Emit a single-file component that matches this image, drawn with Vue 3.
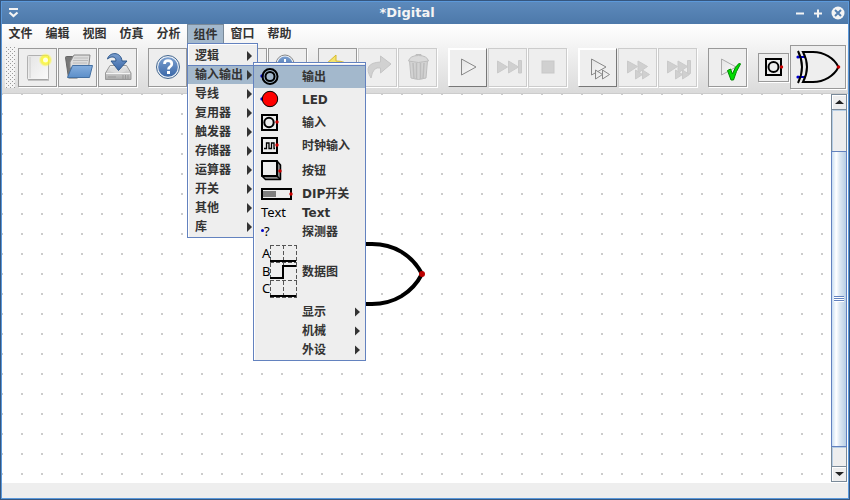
<script setup>
const menus = ['文件', '编辑', '视图', '仿真', '分析', '组件', '窗口', '帮助']
const openMenu = '组件'
const groups = ['逻辑', '输入输出', '导线', '复用器', '触发器', '存储器', '运算器', '开关', '其他', '库']
const openGroup = '输入输出'
const parts = [
  { label: '输出', icon: 'out', size: 'medium', active: true },
  { label: 'LED', icon: 'led', size: 'medium' },
  { label: '输入', icon: 'in', size: 'medium' },
  { label: '时钟输入', icon: 'clock', size: 'medium' },
  { label: '按钮', icon: 'button', size: 'large' },
  { label: 'DIP开关', icon: 'dip', size: 'small' },
  { label: 'Text', icon: 'text', size: 'small' },
  { label: '探测器', icon: 'probe', size: 'small' },
  { label: '数据图', icon: 'graph', size: 'huge' },
  { label: '显示', sub: true, size: 'small' },
  { label: '机械', sub: true, size: 'small' },
  { label: '外设', sub: true, size: 'small' }
]
const toolGroups = [
  [{ icon: 'new', label: 'New' }, { icon: 'open', label: 'Open' }, { icon: 'save', label: 'Save' }],
  [{ icon: 'help', label: 'Help' }, { icon: 'fit', label: 'Fit' }, { icon: 'zoomin', label: 'Zoom in' }, { icon: 'zoomout', label: 'Zoom out' }],
  [{ icon: 'undo', label: 'Undo' }, { icon: 'redo', label: 'Redo', off: true }, { icon: 'trash', label: 'Delete', off: true }],
  [{ icon: 'play', label: 'Start', raised: true }, { icon: 'skip', label: 'Run to break', off: true }, { icon: 'stop', label: 'Stop', off: true }],
  [{ icon: 'micro', label: 'Single gate', raised: true }, { icon: 'fast', label: 'Fast run', off: true }, { icon: 'fastend', label: 'Run to end', off: true }],
  [{ icon: 'check', label: 'Run tests' }]
]
</script>

<template>
  <div class="window">
    <header class="titlebar">
      <button class="win-btn" aria-label="Window menu">
        <svg width="11" height="10" viewBox="0 0 11 10"><path d="M1 1h9" stroke="#f4f4f4" stroke-width="2" /><path d="M1.500 4.500L5.500 8L9.500 4.500" fill="none" stroke="#f4f4f4" stroke-width="2.200" /></svg>
      </button>
      <h1>*Digital</h1>
      <div class="win-actions">
        <button class="win-btn" aria-label="Minimize">
          <svg width="10" height="14" viewBox="0 0 10 14"><path d="M1 7.500h8" stroke="#f4f4f4" stroke-width="2" /></svg>
        </button>
        <button class="win-btn" aria-label="Maximize">
          <svg width="10" height="14" viewBox="0 0 10 14"><path d="M1 7.500h8M5 3.500v8" stroke="#f4f4f4" stroke-width="2" /></svg>
        </button>
        <button class="win-btn" aria-label="Close">
          <svg width="14" height="14" viewBox="0 0 14 14"><circle cx="7" cy="7" r="6.500" fill="#f4f4f4" /><path d="M4 4l6 6M10 4l-6 6" stroke="#5681b2" stroke-width="2" /></svg>
        </button>
      </div>
    </header>

    <div class="bars">
      <ul class="menubar">
        <li v-for="m in menus" :key="m">
          <button class="menu-title" :class="{ open: m === openMenu }">{{ m }}</button>
          <ul v-if="m === openMenu" class="popup groups">
            <li v-for="g in groups" :key="g">
              <button class="entry" :class="{ active: g === openGroup }">
                <span>{{ g }}</span>
                <svg class="arrow" width="5" height="10" viewBox="0 0 5 10"><path d="M0 0L5 5L0 10Z" fill="#333" /></svg>
              </button>
              <ul v-if="g === openGroup" class="popup parts">
                <li v-for="p in parts" :key="p.label">
                  <button class="entry part" :class="[p.size, { active: p.active }]">
                    <span class="icon">
                      <svg v-if="p.icon === 'out'" width="20" height="20" viewBox="0 0 20 20" fill="none" stroke="#000" stroke-width="2"><circle cx="2" cy="9" r="1.700" fill="#00c" stroke="none" /><circle cx="10" cy="9.500" r="7.500" /><circle cx="10" cy="9.500" r="4.500" /></svg>
                      <svg v-else-if="p.icon === 'led'" width="20" height="20" viewBox="0 0 20 20"><circle cx="2" cy="9" r="1.700" fill="#00c" /><circle cx="10" cy="9" r="7.700" fill="#f00" stroke="#000" /></svg>
                      <svg v-else-if="p.icon === 'in'" width="20" height="20" viewBox="0 0 20 20" fill="none" stroke="#000" stroke-width="2"><rect x="2" y="2" width="15" height="15" /><circle cx="9" cy="9.500" r="4.700" /><circle cx="17" cy="9" r="1.700" fill="#c00" stroke="none" /></svg>
                      <svg v-else-if="p.icon === 'clock'" width="20" height="20" viewBox="0 0 20 20" fill="none" stroke="#000" stroke-width="2"><rect x="2" y="2" width="15" height="15" /><path d="M4 12.500h2.500V7H9v5.500h2.500V7H14v5.500h1" stroke-width="1.300" /><circle cx="17" cy="9" r="1.700" fill="#c00" stroke="none" /></svg>
                      <svg v-else-if="p.icon === 'button'" width="24" height="24" viewBox="0 0 24 24" stroke="#000" stroke-width="1.500" stroke-linejoin="round"><path d="M2 17L5.500 20.500H20.500V6L17 2V17Z" fill="#888" /><rect x="2" y="2" width="15" height="15" fill="#eee" stroke-width="2" /><path d="M17 17l3 3" /><circle cx="20" cy="12" r="1.700" fill="#c00" stroke="none" /></svg>
                      <svg v-else-if="p.icon === 'dip'" width="34" height="16" viewBox="0 0 34 16"><rect x="2" y="3" width="29" height="10" fill="none" stroke="#000" stroke-width="2" /><rect x="3" y="5" width="13" height="6" fill="#808080" /><circle cx="31" cy="8" r="1.700" fill="#c00" /></svg>
                      <span v-else-if="p.icon === 'text'" class="glyph">Text</span>
                      <span v-else-if="p.icon === 'probe'" class="glyph probe"><i></i>?</span>
                      <svg v-else-if="p.icon === 'graph'" width="38" height="58" viewBox="0 0 38 58">
                        <path d="M10.500 2V55M23.500 2V55M36.500 2V55M10 2.500H37M10 19.500H37M10 37.500H37M10 54.500H37" fill="none" stroke="#555" stroke-dasharray="4 2" />
                        <path d="M10 18H36M10 35H23V23H36M10 53H36" fill="none" stroke="#000" stroke-width="2" />
                        <g class="glyph"><text x="2" y="15">A</text><text x="2" y="33">B</text><text x="2" y="50">C</text></g>
                      </svg>
                    </span>
                    <span>{{ p.label }}</span>
                    <svg v-if="p.sub" class="arrow" width="5" height="10" viewBox="0 0 5 10"><path d="M0 0.500L5 5L0 9.500Z" fill="#333" /></svg>
                  </button>
                </li>
              </ul>
            </li>
          </ul>
        </li>
      </ul>

      <div class="toolbar">
        <span class="grip"></span>
        <div v-for="(group, i) in toolGroups" :key="i" class="tool-group">
          <button v-for="t in group" :key="t.icon" class="tool" :class="{ raised: t.raised }" :disabled="t.off" :aria-label="t.label">
            <svg width="32" height="32" viewBox="0 0 32 32">
              <g v-if="t.icon === 'new'">
                <rect x="5.500" y="4.500" width="21" height="24" rx="1" fill="url(#paper)" stroke="#b0b0b0" /><path d="M8 6v21" stroke="#ccc" /><path d="M6 29h21" stroke="#999" />
                <circle cx="23.500" cy="9" r="7" fill="url(#glow)" /><circle cx="23.500" cy="9" r="2.500" fill="#ffd" />
              </g>
              <g v-else-if="t.icon === 'open'">
                <path d="M3.500 6.500q0-1 1-1h6l2 2h3V27H6.500Z" fill="#777" stroke="#666" />
                <path d="M8 11L12 4H28L26.500 17H8Z" fill="#ddd" stroke="#888" /><path d="M12 7h14M11 9.500h15M11 12h14" stroke="#bbb" />
                <path d="M10.500 14.500H30.500L27.500 26.500H5.500Z" fill="url(#folder)" stroke="#4470a3" />
              </g>
              <g v-else-if="t.icon === 'save'">
                <path d="M8 14.500H24.500L29 22V28.500H3.500V22Z" fill="url(#drive)" stroke="#999" /><path d="M4 22.500H28" stroke="#f4f4f4" /><path d="M6 26h8M21 24v4M23.500 24v4M26 24v4" stroke="#999" />
                <ellipse cx="16" cy="19" rx="8" ry="3" fill="#ddd" />
                <path d="M5.500 8C7 1 19 0 20 10H25L16.500 19.500L9 10H14C14 5 9 5 5.500 8Z" fill="url(#blue)" stroke="#315a8d" />
              </g>
              <g v-else-if="t.icon === 'help'">
                <circle cx="16" cy="16" r="11.500" fill="#e8eef5" stroke="#44678f" /><circle cx="16" cy="16" r="9.800" fill="url(#blue)" />
                <path d="M12.500 13Q12.500 9.700 16 9.700Q19.800 9.700 19.800 13Q19.800 15 17.700 16.200Q16.500 17 16.500 18.500" fill="none" stroke="#fff" stroke-width="2.700" /><rect x="15" y="20" width="3" height="3" fill="#fff" />
              </g>
              <g v-else-if="t.icon === 'fit' || t.icon === 'zoomin' || t.icon === 'zoomout'">
                <circle cx="13" cy="13" r="9" fill="#e8eef5" stroke="#888" /><circle cx="13" cy="13" r="7.500" fill="url(#blue)" /><path d="M9 13h8M13 8v10" stroke="#fff" stroke-width="2" /><path d="M19 19l8 8" stroke="#777" stroke-width="4" />
              </g>
              <path v-else-if="t.icon === 'undo'" d="M14 4L3 14L14 24V18Q25 17 26 28Q32 10 14 10Z" fill="#f5e36b" stroke="#d6ba30" />
              <path v-else-if="t.icon === 'redo'" d="M18.500 5L29 13L18.500 22V17Q11 15 9 27Q0 12 18.500 11Z" fill="#d1d1d1" stroke="#c5c5c5" />
              <g v-else-if="t.icon === 'trash'" stroke="#bdbdbd">
                <path d="M7.500 9.500H25.500L24 27Q16.500 30 9 27Z" fill="#d3d3d3" /><path d="M11 12l1 15M14.500 12v16M18.500 12v16M22 12l-1 15" stroke-width="1.500" /><path d="M6.500 10Q8 4.500 16.500 4.500T26.500 10Q16.500 13 6.500 10Z" fill="#dadada" /><path d="M14 5V3.500h5V5" fill="none" />
              </g>
              <g v-else-if="t.icon === 'skip'" fill="#d0d0d0" stroke="#cacaca"><path d="M5.500 10L15.500 16L5.500 22Z" /><path d="M16.500 10L26.500 16L16.500 22Z" /><path d="M26.500 9.500h3v12.500h-3Z" /></g>
              <rect v-else-if="t.icon === 'stop'" x="10" y="10" width="12" height="12" fill="#d0d0d0" stroke="#c8c8c8" />
              <g v-else-if="t.icon === 'fast' || t.icon === 'fastend'" fill="#d0d0d0" stroke="#cacaca"><path d="M5.500 10L15.500 15.500L5.500 22Z" /><path d="M16 10L25.500 15.500L16 22Z" /><path d="M13.500 19L20.500 23.500L13.500 28Z" /><path d="M20.500 19L27.500 23.500L20.500 28Z" /><path v-if="t.icon === 'fastend'" d="M25.500 9.500h3v13h-3Z" /></g>
              <path v-else-if="t.icon === 'play'" d="M9.500 8L24 16L9.500 24Z" fill="url(#paper)" stroke="#888" />
              <g v-else-if="t.icon === 'micro'" fill="url(#paper)" stroke="#888"><path d="M9.500 8L24 16L9.500 24Z" /><path d="M13.500 19L20.500 23.500L13.500 28Z" /><path d="M20.500 19L27.500 23.500L20.500 28Z" /></g>
              <g v-else>
                <path d="M9.500 8L24 16L9.500 24Z" fill="url(#paper)" stroke="#aaa" />
                <path d="M15.500 19.500L18.500 18L20.500 23Q23 15 27.500 12L28.500 13Q24 20 21.500 29H19Z" fill="#0d0" stroke="#080" />
              </g>
            </svg>
          </button>
        </div>
        <div class="recent">
          <button class="tool recent-in" aria-label="输入">
            <svg width="22" height="20" viewBox="0 0 22 20" fill="none" stroke="#000" stroke-width="2"><rect x="3" y="2" width="15" height="16" /><circle cx="10.500" cy="10" r="5" /><circle cx="18.500" cy="10" r="1.700" fill="#c00" stroke="none" /></svg>
          </button>
          <button class="tool recent-xor" aria-label="XOR">
            <svg width="50" height="36" viewBox="0 0 50 36" fill="none" stroke="#000" stroke-width="2"><path d="M5 8H12M5 28H12" stroke="#00c" /><circle cx="5" cy="8" r="1.600" fill="#00c" stroke="none" /><circle cx="5" cy="28" r="1.600" fill="#00c" stroke="none" /><path d="M5 2Q13 18 5 34" /><path d="M10 3H20C31 3 41 9 45.500 18C41 27 31 33 20 33H10Q18 18 10 3Z" /><circle cx="45.500" cy="18" r="1.800" fill="#c00" stroke="none" /></svg>
          </button>
        </div>
      </div>
    </div>

    <main class="workspace">
      <div class="canvas">
        <svg class="gate" width="90" height="70" viewBox="0 0 90 70"><path d="M8 5H36C58 5 76 16 86 35C76 54 58 65 36 65H8Q24 35 8 5Z" fill="none" stroke="#000" stroke-width="4" /><circle cx="86" cy="35" r="3" fill="#b00" /></svg>
      </div>
      <div class="scrollbar">
        <button class="scroll-btn" aria-label="Scroll up"><svg width="9" height="4" viewBox="0 0 9 4"><path d="M0 4L4.500 0L9 4Z" fill="#222" /></svg></button>
        <div class="track">
          <div class="before"></div>
          <div class="thumb"><span class="bumps"></span></div>
          <div class="after"></div>
        </div>
        <button class="scroll-btn" aria-label="Scroll down"><svg width="9" height="4" viewBox="0 0 9 4"><path d="M0 0L4.500 4L9 0Z" fill="#222" /></svg></button>
      </div>
    </main>
    <footer class="status"></footer>

    <svg class="defs" width="0" height="0" aria-hidden="true">
      <defs>
        <linearGradient id="paper" x2="1" y2="1"><stop stop-color="#e4e4e4" /><stop offset="1" stop-color="#fafafa" /></linearGradient>
        <radialGradient id="glow"><stop offset="0.300" stop-color="#ff3" /><stop offset="0.700" stop-color="#f8f032" stop-opacity="0.700" /><stop offset="1" stop-color="#ff6" stop-opacity="0" /></radialGradient>
        <linearGradient id="folder" x2="0" y2="1"><stop stop-color="#85aede" /><stop offset="1" stop-color="#5c8fc9" /></linearGradient>
        <linearGradient id="drive" x2="0" y2="1"><stop stop-color="#eee" /><stop offset="1" stop-color="#aaa" /></linearGradient>
        <linearGradient id="blue" x2="0" y2="1"><stop stop-color="#7b9fcf" /><stop offset="1" stop-color="#3b68a8" /></linearGradient>
      </defs>
    </svg>
  </div>
</template>

<style>
body {
  margin: 0;
}
</style>

<style scoped>
.window,
.window * {
  box-sizing: border-box;
}
.window {
  display: flex;
  flex-direction: column;
  min-height: 100vh;
  border: 1px solid #35567f;
  border-top-width: 0;
  font: bold 12px/18px "DejaVu Sans", "Noto Sans CJK SC", sans-serif;
  color: #333;
  background: #fff;
}
button {
  font: inherit;
  color: inherit;
  margin: 0;
  padding: 0;
  border: 0;
  background: none;
}
svg {
  display: block;
  flex: none;
}
ul {
  list-style: none;
  margin: 0;
  padding: 0;
}
.titlebar {
  display: flex;
  align-items: center;
  height: 24px;
  padding: 1px 4px 0 7px;
  border-top: 1px solid #35567f;
  background: linear-gradient(#5d8abc, #4d79aa);
  box-shadow: inset 0 1px #5b99db, inset 1px 0 #5b99db, inset -1px 0 #5b99db;
}
.titlebar h1 {
  flex: 1;
  margin: 0;
  text-align: center;
  font-size: 13px;
  line-height: 20px;
  color: #f4f4f4;
}
.win-actions {
  display: flex;
  justify-content: flex-end;
  gap: 8px;
}
.bars {
  border: 1px solid #5b99db;
  border-width: 0 1px;
  background: linear-gradient(#fff, #dadada);
}
.menubar {
  display: flex;
}
.menubar > li {
  position: relative;
}
.menu-title {
  display: block;
  width: 37px;
  height: 20px;
  border: 1px solid transparent;
  white-space: nowrap;
}
.menu-title.open {
  background: #a3b8cc;
  border-color: #7a8a99;
  border-bottom: 0;
}
.popup {
  position: absolute;
  z-index: 2;
  border: 1px solid #6382bf;
  background: #eee;
  box-shadow: inset 1px 1px #fff;
}
.groups {
  top: 19px;
  left: 0;
  width: 71px;
  padding: 2px 0 1px;
}
.groups > li {
  position: relative;
}
.parts {
  top: -3px;
  left: calc(100% - 4px);
  width: 113px;
  padding: 2px 0 1px;
}
.entry {
  display: flex;
  align-items: center;
  width: 100%;
  height: 19px;
  padding: 0 5px 0 7px;
  white-space: nowrap;
}
.entry.active {
  background: #a3b8cc;
  box-shadow: inset 0 1px #6382bf;
}
.arrow {
  margin-left: auto;
}
.part .icon {
  flex: none;
  display: flex;
  width: 42px;
}
.part {
  padding-left: 6px;
}
.part.medium {
  height: 23px;
}
.part.large {
  height: 27px;
}
.part.huge {
  height: 61px;
}
.glyph {
  font: 13px/18px "Noto Sans", sans-serif;
  color: #000;
}
span.glyph {
  padding: 0 1px 2px;
}
.probe {
  display: flex;
  align-items: center;
}
.probe i {
  width: 3px;
  height: 3px;
  border-radius: 2px;
  background: #00c;
}
.toolbar {
  display: flex;
  align-items: center;
  height: 50px;
  padding: 0 2px 3px 3px;
  border-bottom: 1px solid #ccc;
}
.grip {
  width: 10px;
  height: 42px;
  margin-right: 3px;
  background:
    conic-gradient(from 90deg at 3px 3px, #999 90deg, transparent 0) 0 0 / 4px 4px,
    conic-gradient(from 90deg at 3px 3px, #999 90deg, transparent 0) 2px 2px / 4px 4px,
    #f4f4f4;
}
.tool-group {
  display: flex;
  gap: 1px;
  margin-right: 11px;
}
.tool {
  display: flex;
  align-items: center;
  justify-content: center;
  width: 39px;
  height: 39px;
  border: 1px solid #999;
  background: #eee;
  box-shadow: 1px 1px #fff;
}
.tool:disabled {
  border-color: #ccc;
}
.tool.raised {
  border: 1px solid;
  border-color: #fff #777 #777 #fff;
  box-shadow: inset 1px 1px #fff;
}
.recent {
  display: flex;
  align-items: center;
  gap: 1px;
  margin-left: auto;
}
.recent .recent-in {
  width: 31px;
  height: 29px;
}
.recent .recent-xor {
  width: 56px;
  height: 44px;
}
.workspace {
  flex: 1;
  display: flex;
  border: 1px solid #5b99db;
  border-width: 0 1px;
  padding-right: 1px;
}
.canvas {
  position: relative;
  flex: 1;
  min-height: 300px;
  background: conic-gradient(from 90deg at 18px 18px, #ccc 90deg, transparent 0) -19px -19px / 20px 20px;
}
.gate {
  position: absolute;
  left: 334px;
  top: 145px;
}
.scrollbar {
  display: flex;
  flex-direction: column;
  width: 16px;
  margin-bottom: 1px;
  border: 1px solid #7a8a99;
}
.scroll-btn {
  display: flex;
  align-items: center;
  justify-content: center;
  height: 14px;
  background: #eee;
  box-shadow: inset 1px 1px #fff;
}
.track {
  flex: 1;
  display: flex;
  flex-direction: column;
  border: 1px solid #7a8a99;
  border-width: 1px 0;
  background: #eee;
}
.before {
  flex: 41;
  box-shadow: inset 1px 1px #b8cfe5;
}
.thumb {
  flex: 296;
  display: flex;
  align-items: center;
  justify-content: center;
  margin: 0 -1px;
  border: 1px solid #6382bf;
  background: linear-gradient(90deg, #c8ddf2, #fff 30%, #dde8f3 55%, #b8cfe5);
}
.after {
  flex: 19;
  box-shadow: inset 1px 1px #b8cfe5;
}
.bumps {
  width: 10px;
  height: 6px;
  background: repeating-linear-gradient(#6382bf 0 1px, #fff 1px 2px);
}
.status {
  height: 16px;
  border: 1px solid #5b99db;
  border-top: 0;
  background: #eee;
}
.defs {
  position: absolute;
}
</style>
